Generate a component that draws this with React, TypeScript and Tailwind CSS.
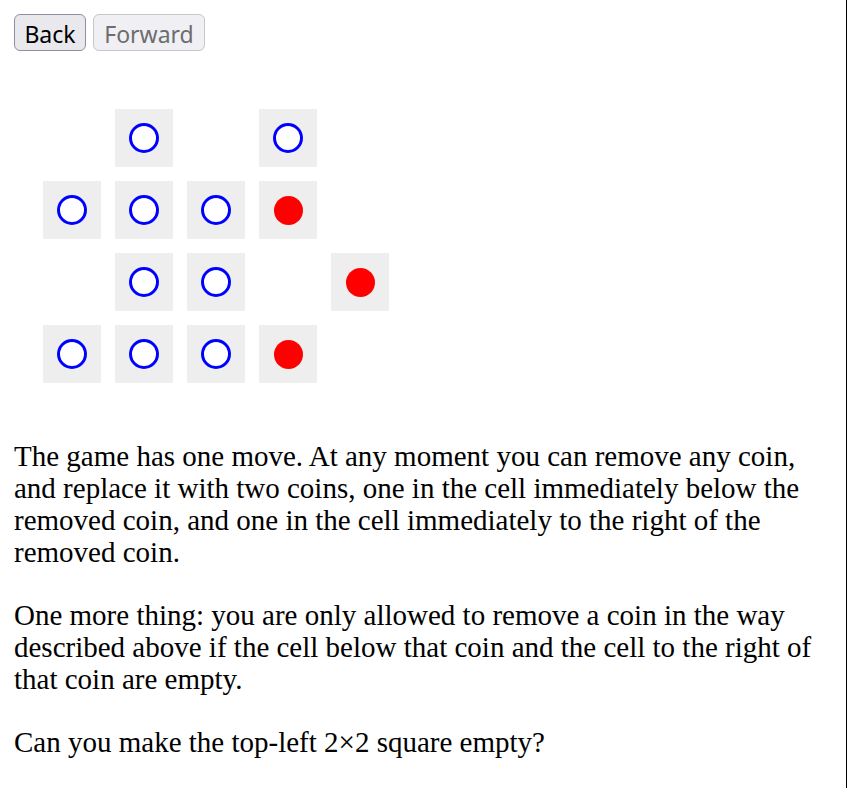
import React from "react";

type Cell = "empty" | "blue" | "red" | null;

// rows of the board, null = no cell drawn
const board: Cell[][] = [
  [null, "blue", null, "blue", null],
  ["blue", "blue", "blue", "red", null],
  [null, "blue", "blue", null, "red"],
  ["blue", "blue", "blue", "red", null],
];

function Coin({ kind }: { kind: Cell }) {
  if (kind === "blue") {
    return <div className="w-[30px] h-[30px] rounded-full border-[3px] border-[#0000ff] bg-white" />;
  }
  if (kind === "red") {
    return <div className="w-[29px] h-[29px] rounded-full bg-[#ff0000]" />;
  }
  return null;
}

export default function App() {
  return (
    <div className="w-[847px] h-[788px] border-r border-black bg-white p-[14px]">
      <div className="flex gap-[7px]" style={{ fontFamily: '"Noto Sans", sans-serif' }}>
        <button className="h-[37px] w-[72px] pt-[3px] rounded-[6px] border border-[#8f8f9d] bg-[#e9e9ed] text-[23px] leading-none text-black">
          Back
        </button>
        <button
          disabled
          className="h-[37px] w-[112px] pt-[3px] rounded-[6px] border border-[#c6c6cc] bg-[#f0f0f4] text-[23px] leading-none text-[#6d6d6d]"
        >
          Forward
        </button>
      </div>

      <div className="mt-[58px] ml-[29px] grid grid-cols-[repeat(5,58px)] auto-rows-[58px] gap-[14px]">
        {board.flatMap((row, r) =>
          row.map((c, i) =>
            c ? (
              <div key={`${r}-${i}`} className="bg-[#eeeeee] flex items-center justify-center">
                <Coin kind={c} />
              </div>
            ) : (
              <div key={`${r}-${i}`} />
            )
          )
        )}
      </div>

      <div className="mt-[57px] text-[29px] leading-[32px] text-black" style={{ fontFamily: '"Liberation Serif", serif' }}>
        <p className="mb-[31px]">
          The game has one move. At any moment you can remove any coin, and replace it with two coins, one in the cell
          immediately below the removed coin, and one in the cell immediately to the right of the removed coin.
        </p>
        <p className="mb-[31px]">
          One more thing: you are only allowed to remove a coin in the way described above if the cell below that coin
          and the cell to the right of that coin are empty.
        </p>
        <p>Can you make the top-left 2×2 square empty?</p>
      </div>
    </div>
  );
}
